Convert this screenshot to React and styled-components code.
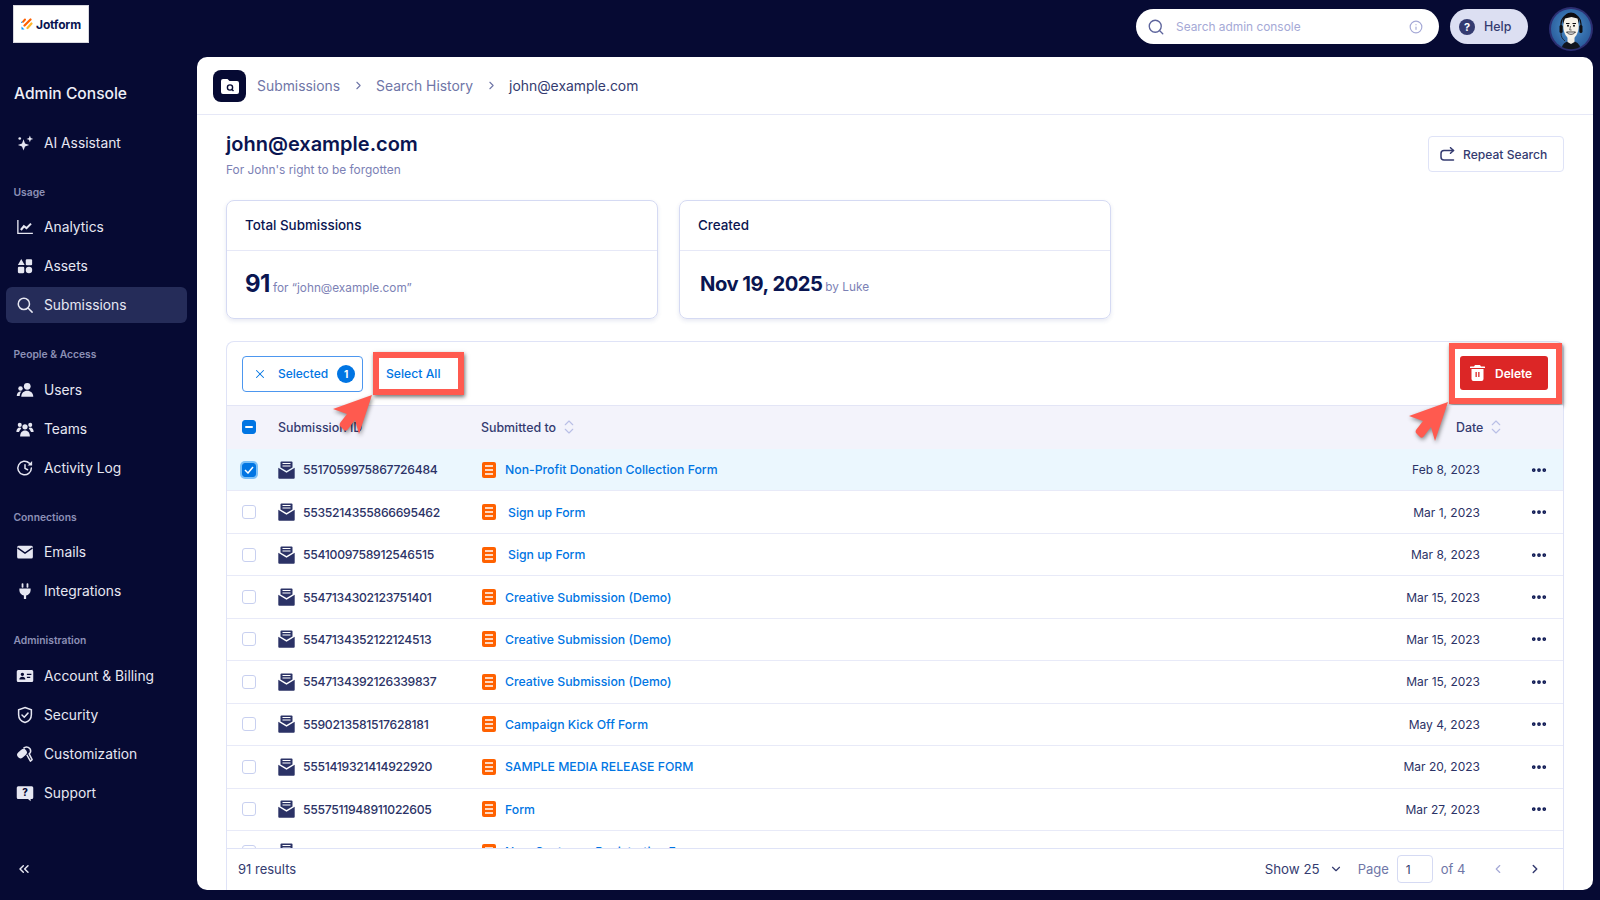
import React from 'react'
import styled, { createGlobalStyle } from 'styled-components'
import { Search, Info, ChevronRight, ChevronLeft, ChevronDown, ChevronsLeft, X, ChevronsUpDown, MoreHorizontal } from 'lucide-react'

const GlobalStyle = createGlobalStyle`
  html, body { margin: 0; padding: 0; background: #060a33; }
  body { font-family: Inter, "Open Sans", sans-serif; color: #0a1551; }
  * { box-sizing: border-box; }
`

const Page = styled.div`
  display: grid;
  grid-template-columns: 197px 1fr;
  grid-template-rows: 900px;
  width: 1600px;
  height: 900px;
  overflow: hidden;
  background: #060a33;
`

/* sidebar */
const Sidebar = styled.aside`
  display: flex;
  flex-direction: column;
  padding: 5px 10px 0 6px;
  color: #e6e7f2;
`
const LogoBox = styled.div`
  display: flex;
  align-items: center;
  justify-content: center;
  gap: 3px;
  width: 76px;
  height: 38px;
  margin-left: 7px;
  background: #fff;
  border: 1px solid #d8d8df;
`
const LogoText = styled.span`
  font-size: 12px;
  font-weight: 700;
  letter-spacing: -0.2px;
  color: #0a1551;
`
const ConsoleTitle = styled.h1`
  margin: 39px 0 18.5px 8px;
  font-size: 15.6px;
  line-height: 24px;
  font-weight: 500;
  color: #eeeff7;
`
const NavGroup = styled.div`
  display: flex;
  flex-direction: column;
  gap: 3px;
  margin-bottom: 23px;
`
const NavLabel = styled.div`
  height: 16px;
  margin: 0 0 9.5px 7.5px;
  font-size: 10.3px;
  line-height: 16px;
  font-weight: 600;
  color: #8c90b6;
`
const NavItem = styled.div`
  display: flex;
  align-items: center;
  gap: 10.5px;
  height: 36px;
  padding-left: 9.5px;
  border-radius: 6px;
  font-size: 13.8px;
  background: ${p => (p.$active ? '#252c59' : 'transparent')};
`
const NavIcon = styled.svg`
  width: 18px;
  height: 18px;
  flex: none;
`
const Collapse = styled.div`
  display: flex;
  margin-top: auto;
  padding: 0 0 23px 10px;
`

/* top bar and panel */
const Right = styled.div`
  display: flex;
  flex-direction: column;
  min-width: 0;
  min-height: 0;
  padding: 0 7px 10px 0;
`
const TopBar = styled.header`
  display: flex;
  align-items: center;
  justify-content: flex-end;
  flex: none;
  height: 57px;
  padding-bottom: 4px;
`
const SearchBox = styled.div`
  display: flex;
  align-items: center;
  width: 303px;
  height: 35px;
  padding: 0 16px 0 11px;
  border-radius: 18px;
  background: #fff;
  font-size: 11.9px;
  color: #a5a9d6;
`
const SearchText = styled.span`
  flex: 1;
  margin-left: 11px;
`
const HelpPill = styled.div`
  display: flex;
  align-items: center;
  gap: 9px;
  width: 78px;
  height: 35px;
  margin: 0 21px 0 11px;
  padding-left: 9px;
  border-radius: 18px;
  background: #dcdff2;
  font-size: 12.4px;
  font-weight: 500;
  color: #343b70;
`
const HelpDot = styled.span`
  display: flex;
  align-items: center;
  justify-content: center;
  width: 16px;
  height: 16px;
  border-radius: 50%;
  background: #343b70;
  font-size: 11px;
  font-weight: 700;
  color: #fff;
`
const Avatar = styled.svg`
  width: 44px;
  height: 44px;
  margin: 4px 0 0;
  flex: none;
`
const Panel = styled.main`
  display: flex;
  flex-direction: column;
  flex: 1;
  min-height: 0;
  border-radius: 10px;
  background: #fff;
`
const Crumbs = styled.nav`
  display: flex;
  align-items: center;
  flex: none;
  height: 58px;
  padding: 0 0 0 16px;
  border-bottom: 1px solid #e6e8f7;
  font-size: 13.9px;
  color: #6f76a7;
`
const CrumbIcon = styled.div`
  display: flex;
  align-items: center;
  justify-content: center;
  width: 33px;
  height: 32px;
  margin-right: 11px;
  border-radius: 8px;
  background: #060a33;
`
const Crumb = styled.span`
  color: ${p => (p.$current ? '#343b70' : '#6f76a7')};
`
const CrumbSep = styled.span`
  display: flex;
  justify-content: center;
  width: 36px;
  color: #6f76a7;
`
const Content = styled.div`
  display: flex;
  flex-direction: column;
  flex: 1;
  min-height: 0;
  padding: 0 29px;
`
const TitleRow = styled.div`
  display: flex;
  justify-content: space-between;
  align-items: flex-start;
  flex: none;
  height: 85px;
`
const Title = styled.h2`
  margin: 15px 0 3px;
  font-size: 20px;
  line-height: 28px;
  font-weight: 600;
  color: #0a1551;
`
const Subtitle = styled.div`
  font-size: 11.9px;
  line-height: 18px;
  color: #7c81b5;
`
const RepeatButton = styled.button`
  display: flex;
  align-items: center;
  gap: 8px;
  width: 136px;
  height: 36px;
  margin-top: 21px;
  padding: 0 0 0 11px;
  border: 1px solid #dfe3f7;
  border-radius: 4px;
  background: #fff;
  font: 500 12.1px Inter, sans-serif;
  color: #343b70;
`
const Cards = styled.div`
  display: flex;
  gap: 21.5px;
  flex: none;
`
const Card = styled.section`
  width: 431.5px;
  height: 119px;
  border: 1px solid #d5daf3;
  border-radius: 8px;
  box-shadow: 0 2px 4px rgba(60, 70, 150, 0.12);
`
const CardHead = styled.div`
  height: 50px;
  padding: 0 18px;
  border-bottom: 1px solid #e6e8f7;
  font-size: 13.4px;
  line-height: 49px;
  font-weight: 500;
  color: #0a1551;
`
const CardBody = styled.div`
  display: flex;
  align-items: baseline;
  gap: 3px;
  padding: 18px 0 0 ${p => (p.$inset ? 20 : 18)}px;
`
const Big = styled.span`
  font-size: ${p => p.$size}px;
  line-height: 30px;
  font-weight: 700;
  letter-spacing: -0.5px;
  color: #0a1551;
`
const Small = styled.span`
  font-size: 11.8px;
  color: #7c81b5;
`

/* table */
const Table = styled.section`
  position: relative;
  display: flex;
  flex-direction: column;
  flex: 1;
  min-height: 0;
  margin-top: 22px;
  border: 1px solid #dfe3f7;
  border-bottom: 0;
  border-radius: 8px 8px 0 0;
`
const Toolbar = styled.div`
  display: flex;
  align-items: center;
  flex: none;
  height: 63px;
  padding: 0 1px 0 15px;
`
const SelectedBtn = styled.div`
  display: flex;
  align-items: center;
  gap: 9px;
  width: 121px;
  height: 36px;
  padding-left: 10px;
  border: 1px solid #4d97ef;
  border-radius: 4px;
  font-size: 12px;
  font-weight: 500;
  color: #0075e3;
`
const SelectedWord = styled.span`
  margin-left: 2px;
`
const CountDot = styled.span`
  display: flex;
  align-items: center;
  justify-content: center;
  width: 18px;
  height: 18px;
  border-radius: 50%;
  background: #0075e3;
  font-size: 10px;
  font-weight: 700;
  color: #fff;
`
const Callout = styled.div`
  display: flex;
  align-items: center;
  width: ${p => p.$w}px;
  height: ${p => p.$h}px;
  border: 6px solid #ff5a4f;
  background: #fff;
  box-shadow: 1px 2px 4px rgba(0, 0, 0, 0.55);
`
const SelectAllSlot = styled.div`
  margin-left: 10px;
`
const SelectAllText = styled.span`
  padding-left: 7px;
  font-size: 12.2px;
  font-weight: 500;
  color: #0075e3;
`
const DeleteSlot = styled.div`
  margin: 0 0 1px auto;
`
const DeleteBtn = styled.div`
  display: flex;
  align-items: center;
  gap: 10px;
  width: 88px;
  height: 34px;
  margin-left: 5px;
  padding-left: 10px;
  border-radius: 3px;
  background: #dc2626;
  font-size: 12px;
  font-weight: 600;
  color: #fff;
`
const gridCols = '51px 203px 1fr 110px 83px'
const HeadRow = styled.div`
  display: grid;
  grid-template-columns: ${gridCols};
  align-items: center;
  flex: none;
  height: 44px;
  padding-bottom: 1px;
  border-top: 1px solid #e3e5f6;
  background: #f3f3fb;
  font-size: 12.4px;
  font-weight: 500;
  color: #343b70;
`
const HeadCell = styled.div`
  display: flex;
  align-items: center;
  gap: 4px;
`
const HeadDate = styled(HeadCell)`
  grid-column: 4 / 6;
  padding-left: 86px;
`
const Rows = styled.div`
  flex: 1;
  min-height: 0;
  overflow: hidden;
`
const Row = styled.div`
  display: grid;
  grid-template-columns: ${gridCols};
  align-items: center;
  height: 42.45px;
  border-bottom: 1px solid #e8eaf8;
  background: ${p => (p.$selected ? '#ebf7fe' : '#fff')};
  font-size: 12px;
  color: #2b3266;
`
const BoxCell = styled.div`
  padding-left: 15px;
`
const Check = styled.span`
  display: flex;
  align-items: center;
  justify-content: center;
  width: 14px;
  height: 14px;
  border-radius: 3px;
  border: 1.5px solid ${p => (p.$on ? '#0075e3' : '#c8d0f0')};
  background: ${p => (p.$on ? '#0075e3' : '#fff')};
  box-shadow: ${p => (p.$ring ? '0 0 0 2px #7cc0f7' : 'none')};
`
const IdCell = styled.div`
  display: flex;
  align-items: center;
  gap: 8px;
  font-size: 12.2px;
  font-weight: 500;
  letter-spacing: -0.3px;
`
const FormCell = styled.div`
  display: flex;
  align-items: center;
  gap: ${p => (p.$indent ? 12 : 9)}px;
  padding-left: 1px;
  font-size: 12.25px;
`
const FormLink = styled.span`
  font-weight: 500;
  color: #0075e3;
`
const DateCell = styled.div`
  text-align: right;
`
const DotsCell = styled.div`
  display: flex;
  justify-content: flex-end;
  padding-right: 15px;
  color: #0a1551;
`
const Footer = styled.div`
  display: flex;
  align-items: center;
  flex: none;
  height: 42px;
  padding: 0 21.5px 1px 11px;
  border-top: 1px solid #dfe3f7;
  font-size: 13px;
  color: #343b70;
`
const Results = styled.span`
  margin-right: auto;
`
const ShowLabel = styled.span`
  display: flex;
  align-items: center;
  gap: 9px;
  margin-right: 15px;
  font-size: 13.3px;
`
const PageLabel = styled.span`
  color: #6f76a7;
`
const PageInput = styled.div`
  display: flex;
  align-items: center;
  width: 36px;
  height: 28px;
  margin: 0 8px;
  padding-left: 8px;
  border: 1px solid #d5daf3;
  border-radius: 4px;
  font-size: 12px;
  color: #343b70;
`
const PagerBtn = styled.span`
  display: flex;
  margin-left: ${p => p.$gap}px;
  color: ${p => (p.$off ? '#a5a9d6' : '#343b70')};
`
const Arrow = styled.svg`
  position: absolute;
  left: ${p => p.$x}px;
  top: ${p => p.$y}px;
  overflow: visible;
  filter: drop-shadow(1px 2px 2px rgba(0, 0, 0, 0.45));
`

const I = ({ children }) => (
  <NavIcon viewBox="0 0 24 24" fill="currentColor">{children}</NavIcon>
)

const icons = {
  ai: <I><path d="M10 7l2 5.500 5.500 2-5.500 2L10 22l-2-5.500L2.500 14.500 8 12.500z" /><path d="M18.500 2l1.200 3.300L23 6.500l-3.300 1.200-1.200 3.300-1.200-3.300L14 6.500l3.300-1.200z" /><circle cx="5" cy="6" r="1.800" /></I>,
  chart: <I><path d="M2.500 2.500v18h20" fill="none" stroke="currentColor" strokeWidth="1.800" /><path d="M6.500 16l4-5 3.500 2.500 6-6" fill="none" stroke="currentColor" strokeWidth="2.800" /></I>,
  assets: <I><path d="M7 2.500l4.500 8h-9z" /><rect x="13" y="3" width="8.500" height="8" rx="1.500" /><rect x="2.500" y="13" width="8.500" height="8.500" rx="1.500" /><circle cx="17.300" cy="17.300" r="4.300" /></I>,
  search: <I><circle cx="10.500" cy="10.500" r="7.500" fill="none" stroke="currentColor" strokeWidth="2" /><path d="M16 16l5.500 5.500" stroke="currentColor" strokeWidth="2" strokeLinecap="round" /></I>,
  users: <I><circle cx="15" cy="7" r="4.500" /><path d="M7 21c0-5 3.500-8 8-8s8 3 8 8z" /><circle cx="6" cy="10" r="3" /><path d="M1 20c0-3.500 2-6 5.500-6 .5 0 .8.100.8.100C5.500 15.800 5 18 5 20z" /></I>,
  teams: <I><circle cx="12" cy="9" r="3.500" /><path d="M5.500 22c0-5 2.500-8 6.500-8s6.500 3 6.500 8z" /><circle cx="5" cy="6.500" r="2.700" /><circle cx="19" cy="6.500" r="2.700" /><path d="M0.500 16c0-4 2-6 4.500-6 1 0 1.800.300 2 .700-.500 1.800-2.500 3.300-3 5.300zM23.500 16c0-4-2-6-4.500-6-1 0-1.800.300-2 .700.500 1.800 2.500 3.300 3 5.300z" /></I>,
  clock: <I><path d="M20.500 12a9 9 0 1 1-2.800-6.500" fill="none" stroke="currentColor" strokeWidth="2" strokeLinecap="round" /><path d="M21.500 2.500v6h-6z" /><path d="M12 7.500V12.500l3.500 1.800" fill="none" stroke="currentColor" strokeWidth="2" strokeLinecap="round" /></I>,
  mail: <I><rect x="1.500" y="3.500" width="21" height="17" rx="2" /><path d="M2 6.500l10 7 10-7" fill="none" stroke="#060a33" strokeWidth="1.800" /></I>,
  plug: <I><rect x="7.500" y="1.500" width="2.400" height="6" rx="1" /><rect x="14.100" y="1.500" width="2.400" height="6" rx="1" /><path d="M4.500 8.500h15v2.500c0 4-3 6.500-6 7v4.500h-3V18c-3-.500-6-3-6-7z" /></I>,
  card: <I><path fillRule="evenodd" d="M3 4h18a2 2 0 0 1 2 2v12a2 2 0 0 1-2 2H3a2 2 0 0 1-2-2V6a2 2 0 0 1 2-2zm5.500 3.500a2.300 2.300 0 1 0 0 4.600 2.300 2.300 0 0 0 0-4.600zM4.500 16.500h8c0-2.200-1.700-3.600-4-3.600s-4 1.400-4 3.600zM14.500 9v1.600h6V9zm0 4v1.600h4.500V13z" /></I>,
  shield: <I><path d="M12 2l8.500 3v6.500c0 5-3.500 8.800-8.500 10.500-5-1.700-8.500-5.500-8.500-10.500V5z" fill="none" stroke="currentColor" strokeWidth="2" /><path d="M8 12l3 3 5-5.500" fill="none" stroke="currentColor" strokeWidth="2" strokeLinecap="round" /></I>,
  brush: <I><rect x="1" y="7" width="14" height="9" rx="4.500" transform="rotate(-40 8 11.500)" /><path d="M10 4.500a5.500 5.500 0 0 1 9.500 4.500c-.3 1.200-1.200 2.200-2 2.800l4 7.700-2.300 2-4.800-8.500" fill="none" stroke="currentColor" strokeWidth="2" strokeLinejoin="round" /></I>,
  help: <I><path d="M3 3h18a2 2 0 0 1 2 2v13a2 2 0 0 1-2 2h-1.500v3l-3.500-3H3a2 2 0 0 1-2-2V5a2 2 0 0 1 2-2z" /><text x="12" y="16.500" textAnchor="middle" fontSize="13" fontWeight="800" fontFamily="Inter, sans-serif" fill="#060a33">?</text></I>,
}

const navGroups = [
  { label: null, items: [['ai', 'AI Assistant']] },
  { label: 'Usage', items: [['chart', 'Analytics'], ['assets', 'Assets'], ['search', 'Submissions', true]] },
  { label: 'People & Access', items: [['users', 'Users'], ['teams', 'Teams'], ['clock', 'Activity Log']] },
  { label: 'Connections', items: [['mail', 'Emails'], ['plug', 'Integrations']] },
  { label: 'Administration', items: [['card', 'Account & Billing'], ['shield', 'Security'], ['brush', 'Customization'], ['help', 'Support']] },
]

const submissions = [
  { id: '5517059975867726484', form: 'Non-Profit Donation Collection Form', date: 'Feb 8, 2023', selected: true },
  { id: '5535214355866695462', form: 'Sign up Form', date: 'Mar 1, 2023', indent: true },
  { id: '5541009758912546515', form: 'Sign up Form', date: 'Mar 8, 2023', indent: true },
  { id: '5547134302123751401', form: 'Creative Submission (Demo)', date: 'Mar 15, 2023' },
  { id: '5547134352122124513', form: 'Creative Submission (Demo)', date: 'Mar 15, 2023' },
  { id: '5547134392126339837', form: 'Creative Submission (Demo)', date: 'Mar 15, 2023' },
  { id: '5590213581517628181', form: 'Campaign Kick Off Form', date: 'May 4, 2023' },
  { id: '5551419321414922920', form: 'SAMPLE MEDIA RELEASE FORM', date: 'Mar 20, 2023' },
  { id: '5557511948911022605', form: 'Form', date: 'Mar 27, 2023' },
  { id: '', form: 'New Customer Registration Form', date: '' },
]

const MailOpen = () => (
  <svg width="17" height="18" viewBox="0 0 17 18">
    <path d="M3.500 0.500h10a1 1 0 0 1 1 1v5l-6 3.500-6-3.500v-5a1 1 0 0 1 1-1z" fill="#2b3266" />
    <path d="M4.500 2.500h8M4.500 5h8" stroke="#fff" strokeWidth="1.200" />
    <path d="M0.300 6.800l8.200 5 8.200-5v10a1 1 0 0 1-1 1H1.300a1 1 0 0 1-1-1z" fill="#2b3266" />
  </svg>
)

const FormIcon = () => (
  <svg width="14" height="16" viewBox="0 0 14 16">
    <rect width="14" height="16" rx="2" fill="#ff6100" />
    <path d="M3 4h8M3 8h8M3 12h8" stroke="#fff" strokeWidth="1.600" />
  </svg>
)

const Trash = () => (
  <svg width="15" height="16" viewBox="0 0 15 16" fill="#fff">
    <path d="M5 0h5l1 1.500h3.500a.5.500 0 0 1 .5.500v1H0V2a.500.500 0 0 1 .5-.500H4z" />
    <path fillRule="evenodd" d="M1.500 4h12v10a2 2 0 0 1-2 2h-8a2 2 0 0 1-2-2zM5.500 7v5h1.300V7zm2.700 0v5h1.300V7z" />
  </svg>
)

const RepeatIcon = () => (
  <svg width="15" height="14" viewBox="0 0 15 14" fill="none" stroke="#343b70" strokeWidth="1.500" strokeLinecap="round" strokeLinejoin="round">
    <path d="M13.500 3.500H4a3 3 0 0 0-3 3V10a3 3 0 0 0 3 3h9.500" />
    <path d="M10.500 0.700l3 2.800-3 2.800" />
  </svg>
)

const FolderSearch = () => (
  <svg width="18" height="16" viewBox="0 0 18 16">
    <path d="M2 1h4.500L8.500 3H16a2 2 0 0 1 2 2v9a2 2 0 0 1-2 2H2a2 2 0 0 1-2-2V3a2 2 0 0 1 2-2z" fill="#fff" />
    <circle cx="9" cy="9.500" r="2.600" fill="none" stroke="#060a33" strokeWidth="1.400" />
    <path d="M11 11.500l1.500 1.500" stroke="#060a33" strokeWidth="1.400" />
  </svg>
)

const LogoMark = () => (
  <svg width="12" height="12" viewBox="0 0 12 12">
    <path d="M4 1.500L2 3.800" stroke="#ff6100" strokeWidth="2" strokeLinecap="round" />
    <path d="M9.500 1.500L3.500 7.500" stroke="#ff6100" strokeWidth="2.200" strokeLinecap="round" />
    <path d="M10.500 5.500L6.500 10" stroke="#ffb629" strokeWidth="2.200" strokeLinecap="round" />
    <path d="M0.500 8.500V11.500H3.500z" fill="#0099ff" />
    <path d="M1 3.500L0.500 5" stroke="#0099ff" strokeWidth="1" />
  </svg>
)

const AvatarPicture = () => (
  <Avatar viewBox="0 0 44 44">
    <defs>
      <radialGradient id="avatarBg" cx="50%" cy="45%" r="55%">
        <stop offset="0%" stopColor="#4d94cf" />
        <stop offset="100%" stopColor="#2a5d9c" />
      </radialGradient>
    </defs>
    <circle cx="22" cy="22" r="22" fill="#2c2f72" />
    <circle cx="22" cy="22" r="20" fill="url(#avatarBg)" />
    <path d="M13 40c1-4 5-6 9-6s8 2 9 6c-5 3-13 3-18 0z" fill="#11151f" />
    <path d="M18.500 30h7v5l-3.500 2-3.500-2z" fill="#f1eee6" />
    <path d="M15 11c2-3 12-3 14 0l.7 8c0 7-3.700 13-7.700 13s-7.700-6-7.700-13z" fill="#f6f3ea" />
    <path d="M14 17c-1.500-9 5-11.500 8-11.500s9.500 2.500 8 11.500l-1.500-5.500-6-1.500-6.500 1.500z" fill="#0f0f12" />
    <path d="M12 22v-5a10 10 0 0 1 20 0v5" fill="none" stroke="#0f0f12" strokeWidth="1.200" />
    <rect x="10.500" y="18" width="3.200" height="8" rx="1.600" fill="#0f0f12" />
    <rect x="30.300" y="18" width="3.200" height="8" rx="1.600" fill="#0f0f12" />
    <path d="M12 26c0 4 1.500 6 4 8" fill="none" stroke="#0f0f12" strokeWidth="0.700" />
    <path d="M17 16.500h3.500M23.500 16.500H27" stroke="#0f0f12" strokeWidth="1.200" />
    <circle cx="19" cy="18.700" r="1" fill="#0f0f12" />
    <circle cx="25" cy="18.700" r="1" fill="#0f0f12" />
    <path d="M21.500 19l-.8 4h2" fill="none" stroke="#0f0f12" strokeWidth="0.600" />
    <path d="M17.500 25c2 3 7 3 9 0z" fill="#fff" stroke="#0f0f12" strokeWidth="0.800" />
  </Avatar>
)

const Pointer = ({ x, y }) => (
  <Arrow $x={x} $y={y} width="40" height="41" viewBox="0 0 40 41">
    <path d="M39 0L0 14l14 5-7 9c-1 2 0 3 1 4l3 3c1 1 3 1 4-1l7-9 4 14z" fill="#ff5a4f" />
  </Arrow>
)

export default function App() {
  return (
    <Page>
      <GlobalStyle />
      <Sidebar>
        <LogoBox>
          <LogoMark />
          <LogoText>Jotform</LogoText>
        </LogoBox>
        <ConsoleTitle>Admin Console</ConsoleTitle>
        {navGroups.map(group => (
          <div key={group.label || 'top'}>
            {group.label && <NavLabel>{group.label}</NavLabel>}
            <NavGroup>
              {group.items.map(([icon, text, active]) => (
                <NavItem key={text} $active={active}>
                  {icons[icon]}
                  {text}
                </NavItem>
              ))}
            </NavGroup>
          </div>
        ))}
        <Collapse><ChevronsLeft size={16} strokeWidth={2.200} /></Collapse>
      </Sidebar>
      <Right>
        <TopBar>
          <SearchBox>
            <Search size={18} color="#5d649c" strokeWidth={1.800} />
            <SearchText>Search admin console</SearchText>
            <Info size={14} color="#a5a9d6" />
          </SearchBox>
          <HelpPill><HelpDot>?</HelpDot>Help</HelpPill>
          <AvatarPicture />
        </TopBar>
        <Panel>
          <Crumbs>
            <CrumbIcon><FolderSearch /></CrumbIcon>
            <Crumb>Submissions</Crumb>
            <CrumbSep><ChevronRight size={13} strokeWidth={2} /></CrumbSep>
            <Crumb>Search History</Crumb>
            <CrumbSep><ChevronRight size={13} strokeWidth={2} /></CrumbSep>
            <Crumb $current>john@example.com</Crumb>
          </Crumbs>
          <Content>
            <TitleRow>
              <div>
                <Title>john@example.com</Title>
                <Subtitle>For John's right to be forgotten</Subtitle>
              </div>
              <RepeatButton><RepeatIcon />Repeat Search</RepeatButton>
            </TitleRow>
            <Cards>
              <Card>
                <CardHead>Total Submissions</CardHead>
                <CardBody><Big $size={24}>91</Big><Small>for “john@example.com”</Small></CardBody>
              </Card>
              <Card>
                <CardHead>Created</CardHead>
                <CardBody $inset><Big $size={20.200}>Nov 19, 2025</Big><Small>by Luke</Small></CardBody>
              </Card>
            </Cards>
            <Table>
              <Toolbar>
                <SelectedBtn>
                  <X size={14} strokeWidth={1.800} />
                  <SelectedWord>Selected</SelectedWord>
                  <CountDot>1</CountDot>
                </SelectedBtn>
                <SelectAllSlot>
                  <Callout $w={91} $h={43}><SelectAllText>Select All</SelectAllText></Callout>
                </SelectAllSlot>
                <DeleteSlot>
                  <Callout $w={113} $h={61}>
                    <DeleteBtn><Trash />Delete</DeleteBtn>
                  </Callout>
                </DeleteSlot>
              </Toolbar>
              <HeadRow>
                <BoxCell><Check $on><svg width="8" height="2"><rect width="8" height="2" rx="1" fill="#fff" /></svg></Check></BoxCell>
                <HeadCell>Submission ID</HeadCell>
                <HeadCell>Submitted to<ChevronsUpDown size={18} color="#b9bfe6" strokeWidth={1.500} /></HeadCell>
                <HeadDate>Date<ChevronsUpDown size={18} color="#b9bfe6" strokeWidth={1.500} /></HeadDate>
              </HeadRow>
              <Rows>
                {submissions.map(row => (
                  <Row key={row.form + row.id} $selected={row.selected}>
                    <BoxCell>
                      <Check $on={row.selected} $ring={row.selected}>
                        {row.selected && <svg width="10" height="8" viewBox="0 0 10 8"><path d="M1 4l3 3 5-6" fill="none" stroke="#fff" strokeWidth="1.500" /></svg>}
                      </Check>
                    </BoxCell>
                    <IdCell><MailOpen />{row.id}</IdCell>
                    <FormCell $indent={row.indent}><FormIcon /><FormLink>{row.form}</FormLink></FormCell>
                    <DateCell>{row.date}</DateCell>
                    {row.id && <DotsCell><MoreHorizontal size={18} strokeWidth={3} /></DotsCell>}
                  </Row>
                ))}
              </Rows>
              <Footer>
                <Results>91 results</Results>
                <ShowLabel>Show 25 <ChevronDown size={14} /></ShowLabel>
                <PageLabel>Page</PageLabel>
                <PageInput>1</PageInput>
                <PageLabel>of 4</PageLabel>
                <PagerBtn $off $gap={25}><ChevronLeft size={14} /></PagerBtn>
                <PagerBtn $gap={23}><ChevronRight size={14} strokeWidth={2.500} /></PagerBtn>
              </Footer>
              <Pointer x={106} y={53} />
              <Pointer x={1182} y={60} />
            </Table>
          </Content>
        </Panel>
      </Right>
    </Page>
  )
}
